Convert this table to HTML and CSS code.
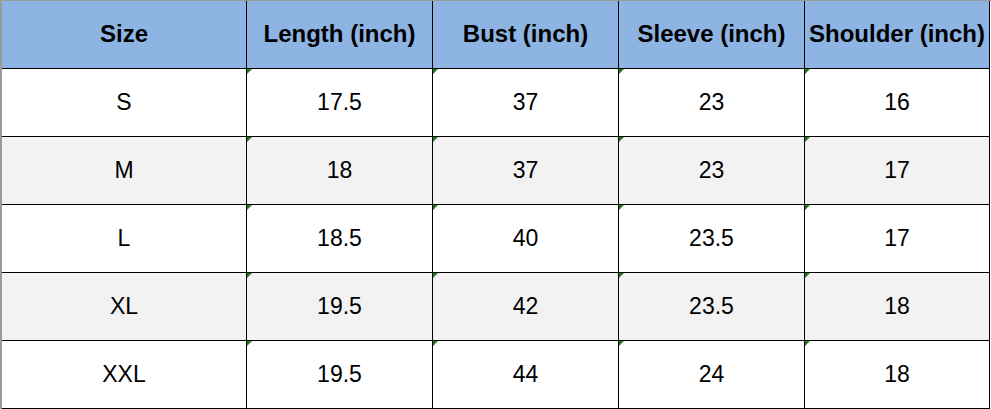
FILE: index.html
```html
<!DOCTYPE html>
<html>
<head>
<meta charset="utf-8">
<link rel="stylesheet" href="styles.css">
</head>
<body>
<div class="sheet">
  <div class="row head">
    <div class="cell">Size</div>
    <div class="cell">Length (inch)</div>
    <div class="cell">Bust (inch)</div>
    <div class="cell">Sleeve (inch)</div>
    <div class="cell">Shoulder (inch)</div>
  </div>
  <div class="row">
    <div class="cell">S</div>
    <div class="cell num">17.5</div>
    <div class="cell num">37</div>
    <div class="cell num">23</div>
    <div class="cell num">16</div>
  </div>
  <div class="row alt">
    <div class="cell">M</div>
    <div class="cell num">18</div>
    <div class="cell num">37</div>
    <div class="cell num">23</div>
    <div class="cell num">17</div>
  </div>
  <div class="row">
    <div class="cell">L</div>
    <div class="cell num">18.5</div>
    <div class="cell num">40</div>
    <div class="cell num">23.5</div>
    <div class="cell num">17</div>
  </div>
  <div class="row alt">
    <div class="cell">XL</div>
    <div class="cell num">19.5</div>
    <div class="cell num">42</div>
    <div class="cell num">23.5</div>
    <div class="cell num">18</div>
  </div>
  <div class="row">
    <div class="cell">XXL</div>
    <div class="cell num">19.5</div>
    <div class="cell num">44</div>
    <div class="cell num">24</div>
    <div class="cell num">18</div>
  </div>
</div>
</body>
</html>
```
FILE: styles.css
```css
html, body {
  margin: 0;
  padding: 0;
  background: #ffffff;
}
.sheet {
  width: 991px;
  height: 409px;
  box-sizing: border-box;
  border-top: 1px solid #9a9a9a;
  border-left: 2px solid #9a9a9a;
  padding-right: 1px;
  font-family: "Liberation Sans", Arial, sans-serif;
  color: #000;
  display: flex;
  flex-direction: column;
}
.row {
  display: grid;
  grid-template-columns: 245px 186px 186px 186px 185px;
  height: 68px;
  background: #ffffff;
}
.row.alt {
  background: #f2f2f2;
}
.row.head {
  background: #8db4e2;
  font-weight: bold;
}
.cell {
  position: relative;
  box-sizing: border-box;
  border-right: 1px solid #000;
  border-bottom: 1px solid #000;
  display: flex;
  align-items: center;
  justify-content: center;
  font-size: 23px;
  white-space: nowrap;
}
.row.head .cell {
  font-size: 24px;
  padding-bottom: 1px;
}
.num::before {
  content: "";
  position: absolute;
  left: 0;
  top: 0;
  width: 0;
  height: 0;
  border-top: 5px solid #1f7d1f;
  border-right: 5px solid transparent;
}
```
